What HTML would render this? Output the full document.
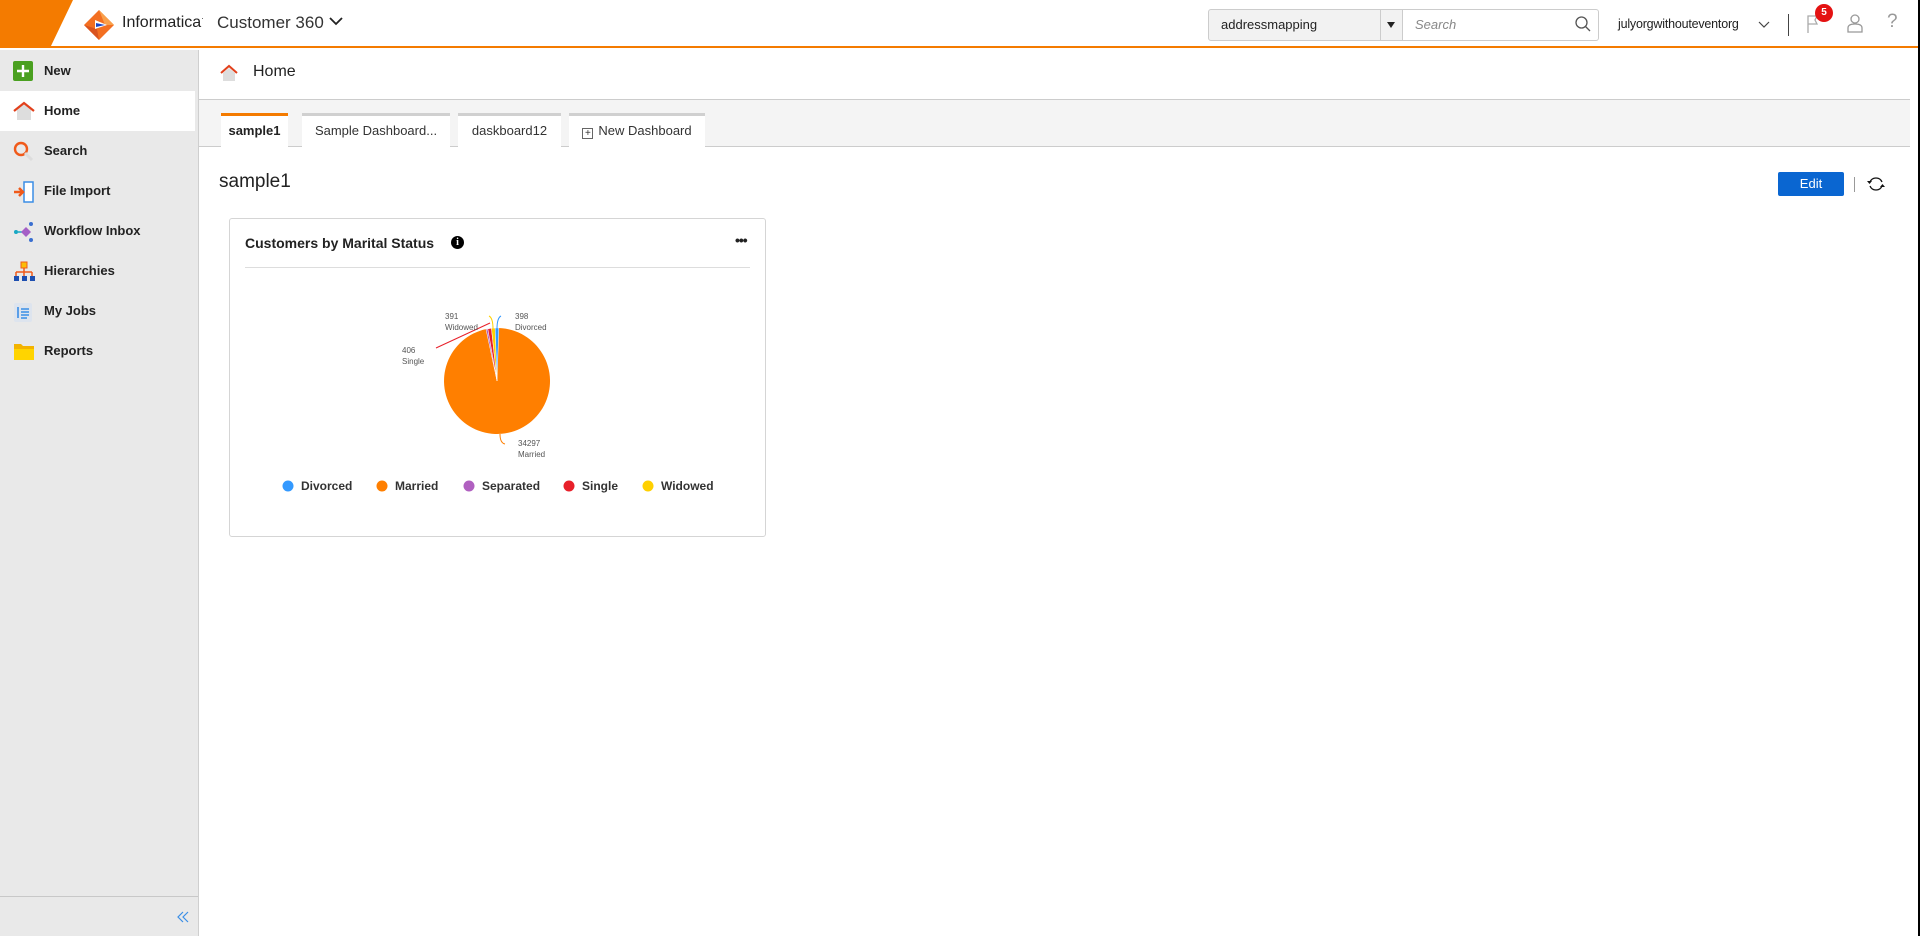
<!DOCTYPE html>
<html><head><meta charset="utf-8"><style>
*{box-sizing:border-box;margin:0;padding:0}
body{width:1920px;height:936px;overflow:hidden;background:#fff;font-family:"Liberation Sans",Arial,sans-serif;color:#222;position:relative}
.abs{position:absolute}
.hdr{left:0;top:0;width:1920px;height:48px;background:#fff;border-bottom:2px solid #f47b00}
.side{left:0;top:50px;width:199px;height:886px;background:#e9e9e9;border-right:1px solid #cfcfcf}
.item{position:absolute;left:0;width:195px;height:40px;font-weight:bold;font-size:13px;color:#222;line-height:40px;padding-left:44px}
.item svg{position:absolute;left:13px;top:10px}
.tab{position:absolute;top:113px;height:34px;background:#fff;border-top:3px solid #d0d0d0;font-size:13px;line-height:30px;text-align:center;color:#333}
</style></head><body>
<div class="abs hdr"></div>
<svg class="abs" style="left:0;top:0" width="80" height="48"><polygon points="0,0 73,0 50,48 0,48" fill="#f47b00"/></svg>
<svg class="abs" style="left:83px;top:9px" width="32" height="32" viewBox="0 0 32 32"><polygon points="16,1 31,16 16,31 1,16" fill="#f36f21"/><polygon points="16,1 31,16 22,16" fill="#f9a04b"/><polygon points="1,16 16,31 14,20" fill="#d9531e"/><polygon points="12,11 24,16 12,20" fill="#fff"/><polygon points="13,14 22,16 13,18" fill="#1b46c6"/></svg>
<div class="abs" style="left:122px;top:14px;font-size:16px;color:#222">Informatica<span style="font-size:8px;vertical-align:top">·</span></div>
<div class="abs" style="left:217px;top:13px;font-size:17px;color:#333">Customer 360</div>
<svg class="abs" style="left:328px;top:15px" width="16" height="12"><path d="M2 3 L8 9 L14 3" stroke="#222" stroke-width="1.8" fill="none"/></svg>
<div class="abs" style="left:1208px;top:9px;width:195px;height:32px;background:#f2f2f2;border:1px solid #ccc;border-radius:3px 0 0 3px;font-size:13px;line-height:30px;padding-left:12px">addressmapping</div>
<div class="abs" style="left:1380px;top:10px;width:1px;height:30px;background:#ccc"></div>
<svg class="abs" style="left:1386px;top:21px" width="10" height="8"><polygon points="1,1 9,1 5,7" fill="#222"/></svg>
<div class="abs" style="left:1402px;top:9px;width:197px;height:32px;border:1px solid #ccc;border-radius:0 3px 3px 0;font-size:13px;line-height:30px;padding-left:12px;color:#888;font-style:italic">Search</div>
<svg class="abs" style="left:1574px;top:15px" width="18" height="18"><circle cx="7.5" cy="7.5" r="5.5" stroke="#555" stroke-width="1.3" fill="none"/><path d="M11.5 11.5 L16 16" stroke="#555" stroke-width="1.3"/></svg>
<div class="abs" style="left:1618px;top:17px;font-size:12.5px;color:#222;letter-spacing:-0.2px">julyorgwithouteventorg</div>
<svg class="abs" style="left:1758px;top:20px" width="12" height="10"><path d="M1 2 L6 7 L11 2" stroke="#444" stroke-width="1.2" fill="none"/></svg>
<div class="abs" style="left:1788px;top:14px;width:1px;height:22px;background:#444"></div>
<svg class="abs" style="left:1806px;top:14px" width="14" height="20"><path d="M2 19 V2 H11 L9 6 L11 10 H2" stroke="#aaa" stroke-width="1.3" fill="none"/></svg>
<div class="abs" style="left:1815px;top:4px;width:18px;height:18px;border-radius:50%;background:#e41212;color:#fff;font-size:10px;font-weight:bold;text-align:center;line-height:18px">5</div>
<svg class="abs" style="left:1846px;top:13px" width="18" height="20"><circle cx="9" cy="6" r="4" stroke="#999" stroke-width="1.3" fill="none"/><path d="M2 19 V15 Q2 11 9 11 Q16 11 16 15 V19 Z" stroke="#999" stroke-width="1.3" fill="none"/></svg>
<div class="abs" style="left:1887px;top:11px;font-size:19px;color:#999">?</div>
<div class="abs" style="left:1918px;top:0;width:2px;height:936px;background:#000"></div>

<div class="abs side">
<div class="item" style="top:1px"><svg width="20" height="20"><rect width="20" height="20" rx="2" fill="#4aa020"/><path d="M10 4V16M4 10H16" stroke="#fff" stroke-width="2.4"/></svg>New</div>
<div class="item" style="top:41px;background:#fff"><svg width="22" height="20"><path d="M4 9 L11 3 L18 9 V19 H4Z" fill="#ddd"/><path d="M1 10 L11 2 L21 10" stroke="#e2401b" stroke-width="2.2" fill="none"/></svg>Home</div>
<div class="item" style="top:81px"><svg width="22" height="22"><circle cx="8" cy="8" r="6" stroke="#f05a1a" stroke-width="2.4" fill="none"/><path d="M12 12 L19 19" stroke="#ddd" stroke-width="3"/></svg>Search</div>
<div class="item" style="top:121px"><svg width="22" height="22"><rect x="11" y="1" width="9" height="20" stroke="#3a8ee6" stroke-width="1.5" fill="#fff"/><path d="M1 11 H10 M6 7 L10 11 L6 15" stroke="#f05a1a" stroke-width="2.5" fill="none"/></svg>File Import</div>
<div class="item" style="top:161px"><svg width="22" height="22"><circle cx="3" cy="11" r="2" fill="#18a8c4"/><path d="M5 11H9" stroke="#18a8c4" stroke-width="1.5"/><polygon points="13,6 18,11 13,16 8,11" fill="#a45fc6"/><circle cx="18" cy="3" r="2" fill="#3a6fd0"/><circle cx="18" cy="19" r="2" fill="#3a6fd0"/></svg>Workflow Inbox</div>
<div class="item" style="top:201px"><svg width="22" height="22"><rect x="8" y="1" width="6" height="6" fill="#fbbd08" stroke="#f05a1a"/><path d="M11 7V11M3 11H19M3 11V15M11 11V15M19 11V15" stroke="#f05a1a" stroke-width="1.5" fill="none"/><rect x="1" y="15" width="5" height="5" fill="#1e4fb0"/><rect x="9" y="15" width="5" height="5" fill="#1e4fb0"/><rect x="17" y="15" width="5" height="5" fill="#1e4fb0"/></svg>Hierarchies</div>
<div class="item" style="top:241px"><svg width="22" height="22"><rect x="1" y="2" width="18" height="19" rx="2" fill="#dde4ee"/><path d="M5 6V17M8 8H16M8 11H16M8 14H16M8 17H14" stroke="#3a8ee6" stroke-width="1.6"/></svg>My Jobs</div>
<div class="item" style="top:281px"><svg width="22" height="20"><path d="M1 3H8L10 5H21V19H1Z" fill="#f3b300"/><path d="M1 8H21V19H1Z" fill="#ffd400"/></svg>Reports</div>
<div class="abs" style="left:0;top:846px;width:198px;height:1px;background:#c8c8c8"></div>
<svg class="abs" style="left:176px;top:860px" width="14" height="14"><path d="M7 2 L2 7 L7 12 M12 2 L7 7 L12 12" stroke="#3a8ee6" stroke-width="1.2" fill="none"/></svg>
</div>

<svg class="abs" style="left:220px;top:64px" width="18" height="18"><path d="M3 9 L9 4 L15 9 V17 H3Z" fill="#ddd"/><path d="M1 9 L9 2 L17 9" stroke="#e2401b" stroke-width="2" fill="none"/></svg>
<div class="abs" style="left:253px;top:63px;font-size:16px;color:#222">Home</div>
<div class="abs" style="left:199px;top:99px;width:1711px;height:48px;background:#f4f4f4;border-top:1px solid #ccc;border-bottom:1px solid #ccc"></div>
<div class="tab" style="left:221px;width:67px;border-top-color:#f47b00;font-weight:bold;color:#222">sample1</div>
<div class="tab" style="left:302px;width:148px">Sample Dashboard...</div>
<div class="tab" style="left:458px;width:103px">daskboard12</div>
<div class="tab" style="left:569px;width:136px"><span style="display:inline-block;width:11px;height:11px;border:1px solid #666;font-size:10px;line-height:9px;vertical-align:-1px;margin-right:5px">+</span>New Dashboard</div>
<div class="abs" style="left:219px;top:171px;font-size:19px;color:#222">sample1</div>
<div class="abs" style="left:1778px;top:172px;width:66px;height:24px;background:#0a66d1;border-radius:2px;color:#fff;font-size:13px;text-align:center;line-height:24px">Edit</div>
<div class="abs" style="left:1854px;top:177px;width:1px;height:15px;background:#999"></div>
<svg class="abs" style="left:1866px;top:174px" width="20" height="20"><path d="M4 8 A6.5 6.5 0 0 1 16 8 M16 12 A6.5 6.5 0 0 1 4 12" stroke="#111" stroke-width="1.3" fill="none"/><polygon points="1,7 6,7 3.5,10" fill="#111"/><polygon points="14,13 19,13 16.5,10" fill="#111"/></svg>

<div class="abs" style="left:229px;top:218px;width:537px;height:319px;border:1px solid #d5d5d5;border-radius:3px"></div>
<div class="abs" style="left:245px;top:235px;font-size:14px;font-weight:bold;color:#222">Customers by Marital Status</div>
<div class="abs" style="left:451px;top:236px;width:13px;height:13px;border-radius:50%;background:#000;color:#fff;font-size:10px;font-weight:bold;text-align:center;line-height:13px;font-family:'Liberation Serif',serif">i</div>
<div class="abs" style="left:735px;top:232px;font-size:14px;font-weight:bold;letter-spacing:-1px">•••</div>
<div class="abs" style="left:245px;top:267px;width:505px;height:1px;background:#ddd"></div>
<svg class="abs" style="left:229px;top:218px" width="537" height="319">
<g transform="translate(-229,-218)" font-family="Liberation Sans" font-size="8" fill="#555">
<path d="M497 381 L498.85 328.03 A53 53 0 1 1 485.98 329.16 Z" fill="#ff7f00"/>
<path d="M497 381 L485.98 329.16 L487.8 328.8 Z" fill="#b060c0" stroke="#fff" stroke-width=".5"/>
<path d="M497 381 L487.8 328.8 L491.46 328.29 Z" fill="#e8202a" stroke="#fff" stroke-width=".5"/>
<path d="M497 381 L491.46 328.29 L495.15 328.03 Z" fill="#ffd000" stroke="#fff" stroke-width=".5"/>
<path d="M497 381 L495.15 328.03 L498.85 328.03 Z" fill="#3399ff" stroke="#fff" stroke-width=".5"/>
<path d="M436 348 L490 323" stroke="#e8202a" stroke-width="1" fill="none"/>
<path d="M497 329 Q497 318 501 316" stroke="#3399ff" stroke-width="1" fill="none"/>
<path d="M493 329 Q493 318 489 316" stroke="#ffd000" stroke-width="1" fill="none"/>
<path d="M500 434 Q500 443 505 444" stroke="#ff7f00" stroke-width="1" fill="none"/>
<text x="445" y="319">391</text><text x="445" y="330">Widowed</text>
<text x="515" y="319">398</text><text x="515" y="330">Divorced</text>
<text x="402" y="353">406</text><text x="402" y="364">Single</text>
<text x="518" y="446">34297</text><text x="518" y="457">Married</text>
<g font-size="12" fill="#333" font-weight="bold">
<circle cx="288" cy="486" r="5.5" fill="#3399ff"/><text x="301" y="490">Divorced</text>
<circle cx="382" cy="486" r="5.5" fill="#ff7f00"/><text x="395" y="490">Married</text>
<circle cx="469" cy="486" r="5.5" fill="#b060c0"/><text x="482" y="490">Separated</text>
<circle cx="569" cy="486" r="5.5" fill="#e8202a"/><text x="582" y="490">Single</text>
<circle cx="648" cy="486" r="5.5" fill="#ffd000"/><text x="661" y="490">Widowed</text>
</g></g></svg>
</body></html>
